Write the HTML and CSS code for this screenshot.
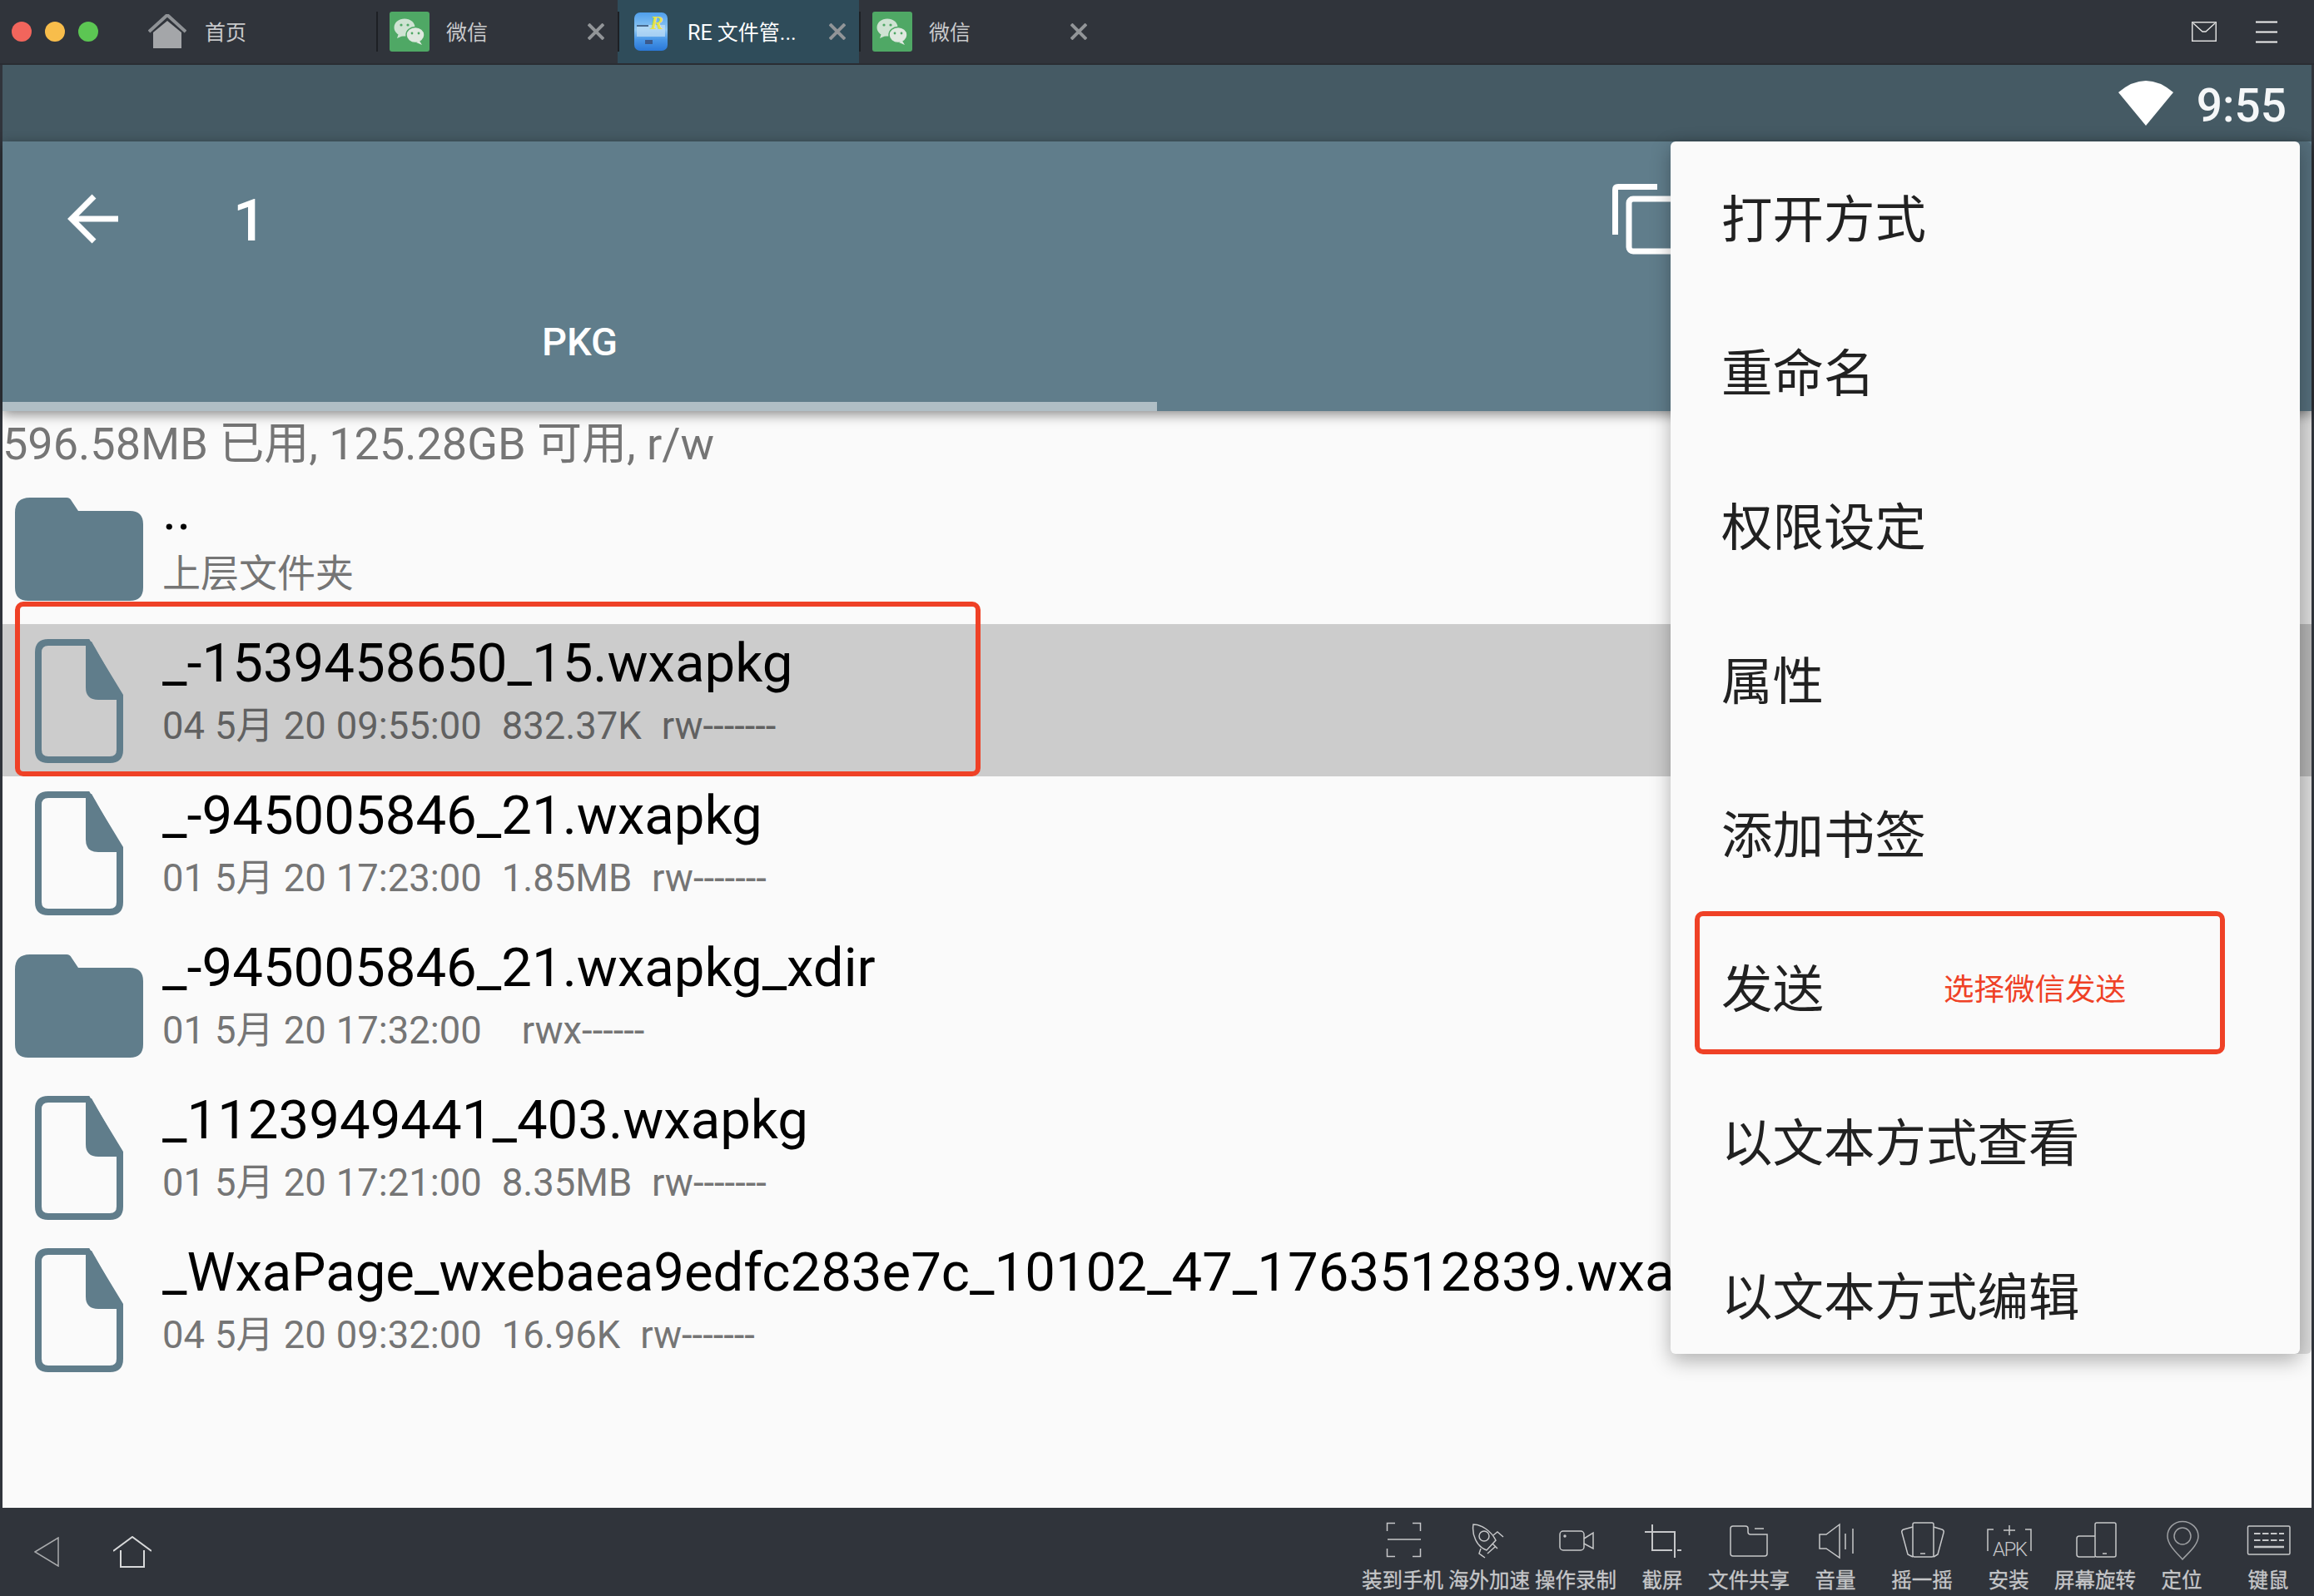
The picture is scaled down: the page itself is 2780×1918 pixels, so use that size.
FILE: index.html
```html
<!DOCTYPE html>
<html lang="zh-CN">
<head>
<meta charset="utf-8">
<title>RE 文件管理器</title>
<link rel="stylesheet" href="styles.css">
</head>
<body>
<svg class="defs" width="0" height="0" aria-hidden="true">
  <defs>
    <symbol id="wechat" viewBox="0 0 48 48">
      <rect width="48" height="48" rx="3" fill="#4fa865"/>
      <ellipse cx="18" cy="19" rx="12.5" ry="10.5" fill="#cfe3d3"/>
      <path d="M11 26l-2 6 7-3z" fill="#cfe3d3"/>
      <ellipse cx="31" cy="28" rx="11" ry="9.5" fill="#dfe9e0" stroke="#4fa865" stroke-width="1.5"/>
      <path d="M36 35l3 5-7-3z" fill="#dfe9e0"/>
      <circle cx="14" cy="16" r="1.6" fill="#4fa865"/><circle cx="22" cy="16" r="1.6" fill="#4fa865"/>
      <circle cx="27" cy="26" r="1.4" fill="#4fa865"/><circle cx="35" cy="26" r="1.4" fill="#4fa865"/>
    </symbol>
    <symbol id="file" viewBox="0 0 106 149">
      <path d="M16 4H63L102 68V133Q102 145 90 145H16Q4 145 4 133V16Q4 4 16 4Z" fill="none" stroke="#607d8b" stroke-width="8"/>
      <path d="M61 3H68L106 70V73H76Q61 73 61 58Z" fill="#607d8b"/>
    </symbol>
    <symbol id="folder" viewBox="0 0 154 124">
      <path d="M18 0H62Q66 0 68 4L76 16H138Q154 16 154 32V108Q154 124 138 124H16Q0 124 0 108V18Q0 0 18 0Z" fill="#607d8b"/>
    </symbol>
  </defs>
</svg>
<div class="screen">
  <header class="tabbar">
    <div class="tabbar-start">
      <div class="lights">
        <span class="light light-red"></span>
        <span class="light light-yellow"></span>
        <span class="light light-green"></span>
      </div>
      <div class="home-tab">
        <svg class="home-icon" width="46" height="42" viewBox="0 0 46 42">
          <path d="M1 21L23 1L45 21" fill="none" stroke="#8f9296" stroke-width="4"/>
          <path d="M6 22L23 8L40 22V41H6Z" fill="#a4a6a9"/>
        </svg>
        <span class="tab-label">首页</span>
      </div>
    </div>
    <div class="tab">
      <span class="tab-sep"></span>
      <svg class="tab-icon"><use href="#wechat"/></svg>
      <span class="tab-label">微信</span>
      <svg class="tab-close" width="20" height="20" viewBox="0 0 20 20"><path d="M1 1L19 19M19 1L1 19"/></svg>
    </div>
    <div class="tab tab-active">
      <span class="tab-sep"></span>
      <svg class="tab-icon" viewBox="0 0 48 48">
        <defs><linearGradient id="reblue" x1="0" y1="0" x2="0" y2="1"><stop offset="0" stop-color="#4f9fec"/><stop offset=".45" stop-color="#8fc8f4"/><stop offset=".7" stop-color="#4a98e8"/><stop offset="1" stop-color="#2a78d8"/></linearGradient></defs>
        <rect x="4" y="1" width="40" height="46" rx="7" fill="url(#reblue)"/>
        <path d="M7 16h34v14H7z" fill="#bcdcf6" opacity=".75"/>
        <path d="M7 17h14" stroke="#26456b" stroke-width="1.5"/>
        <rect x="17" y="34" width="9" height="5" fill="#3b5a8c"/>
        <text x="23" y="21" class="re-letter">R</text>
      </svg>
      <span class="tab-label">RE 文件管...</span>
      <svg class="tab-close" width="20" height="20" viewBox="0 0 20 20"><path d="M1 1L19 19M19 1L1 19"/></svg>
    </div>
    <div class="tab">
      <span class="tab-sep"></span>
      <svg class="tab-icon"><use href="#wechat"/></svg>
      <span class="tab-label">微信</span>
      <svg class="tab-close" width="20" height="20" viewBox="0 0 20 20"><path d="M1 1L19 19M19 1L1 19"/></svg>
    </div>
    <div class="tabbar-actions">
      <svg width="30" height="24" viewBox="0 0 30 24">
        <rect x=".75" y=".75" width="28.5" height="22.5" fill="none" stroke="#dcdcdc" stroke-width="1.5"/>
        <path d="M2 2L13 12H17L28 2" fill="none" stroke="#e8e8e8" stroke-width="1.3"/>
      </svg>
      <svg width="26" height="27" viewBox="0 0 26 27"><path d="M0 1.5H26M0 13.5H26M0 25.5H26" stroke="#eeeeee" stroke-width="2"/></svg>
    </div>
  </header>

  <main class="device">
    <div class="statusbar">
      <svg width="66" height="54" viewBox="0 0 66 54"><path d="M33 54L0 14Q33 -14 66 14Z" fill="#fff"/></svg>
      <span class="clock">9:55</span>
    </div>

    <section class="toolbar">
      <div class="toolbar-head">
        <svg class="back" width="61" height="60" viewBox="0 0 61 60"><path d="M61 30H6M32 3L5 30L32 57" fill="none" stroke="#fff" stroke-width="7"/></svg>
        <span class="title">1</span>
        <svg class="copy" width="80" height="85" viewBox="0 0 80 85" fill="none" stroke="#fff" stroke-width="7">
          <path d="M3.5 61V7Q3.5 3.5 7 3.5H54"/>
          <rect x="20" y="18" width="72" height="63" rx="5"/>
        </svg>
      </div>
      <div class="toolbar-tab">PKG</div>
    </section>

    <section class="files">
      <div class="storage">596.58MB 已用, 125.28GB 可用, r/w</div>
      <div class="row">
        <div class="row-icon"><svg class="ico-folder"><use href="#folder"/></svg></div>
        <div class="row-text"><div class="name">..</div><div class="meta meta-parent">上层文件夹</div></div>
      </div>
      <div class="row row-selected">
        <div class="row-icon"><svg class="ico-file"><use href="#file"/></svg></div>
        <div class="row-text"><div class="name">_-1539458650_15.wxapkg</div><div class="meta">04 5月 20 09:55:00  832.37K  rw-------</div></div>
      </div>
      <div class="row">
        <div class="row-icon"><svg class="ico-file"><use href="#file"/></svg></div>
        <div class="row-text"><div class="name">_-945005846_21.wxapkg</div><div class="meta">01 5月 20 17:23:00  1.85MB  rw-------</div></div>
      </div>
      <div class="row">
        <div class="row-icon"><svg class="ico-folder"><use href="#folder"/></svg></div>
        <div class="row-text"><div class="name">_-945005846_21.wxapkg_xdir</div><div class="meta">01 5月 20 17:32:00    rwx------</div></div>
      </div>
      <div class="row">
        <div class="row-icon"><svg class="ico-file"><use href="#file"/></svg></div>
        <div class="row-text"><div class="name">_1123949441_403.wxapkg</div><div class="meta">01 5月 20 17:21:00  8.35MB  rw-------</div></div>
      </div>
      <div class="row">
        <div class="row-icon"><svg class="ico-file"><use href="#file"/></svg></div>
        <div class="row-text"><div class="name">_WxaPage_wxebaea9edfc283e7c_10102_47_1763512839.wxapkg</div><div class="meta">04 5月 20 09:32:00  16.96K  rw-------</div></div>
      </div>
    </section>
  </main>

  <footer class="dock">
    <div class="nav">
      <svg width="30" height="36" viewBox="0 0 30 36"><path d="M1 18L29 1V35Z" fill="none" stroke="#a9abad" stroke-width="1.5"/></svg>
      <svg width="46" height="38" viewBox="0 0 46 38" fill="none" stroke="#d8d9da" stroke-width="2"><path d="M0 18L23 1L46 18"/><path d="M9 17V37H37V17"/></svg>
    </div>
    <div class="tools">
      <div class="tool">
        <svg class="tool-icon" viewBox="0 0 60 44"><path d="M21 1.5H11.5V11M42 1.5H51.5V11M11.5 32V41.5H21M51.5 32V41.5H42M12 21H52"/></svg>
        <span>装到手机</span>
      </div>
      <div class="tool">
        <svg class="tool-icon" viewBox="0 0 60 44"><path d="M11 3C20 3 32 10 38 22L27 34C15 30 9 15 11 3Z"/><circle cx="24" cy="17" r="6"/><path d="M35 16L40 12L47 18M20 32L18 38L25 43M37 30L28 38M34 26L40 32"/></svg>
        <span>海外加速</span>
      </div>
      <div class="tool">
        <svg class="tool-icon" viewBox="0 0 60 44"><rect x="11" y="11" width="29" height="23" rx="4"/><path d="M40 20L51 13V32L40 26"/><circle cx="17" cy="17" r="1" class="dot"/></svg>
        <span>操作录制</span>
      </div>
      <div class="tool">
        <svg class="tool-icon icon-bold" viewBox="0 0 60 44"><path d="M9 12H45V43M18 3V34H42M48 34H53"/></svg>
        <span>截屏</span>
      </div>
      <div class="tool">
        <svg class="tool-icon" viewBox="0 0 60 44"><path d="M8 8Q8 5 11 5H26Q29 5 29 8V12Q29 15 32 15H52V38Q52 41 49 41H11Q8 41 8 38ZM37 8H48"/></svg>
        <span>文件共享</span>
      </div>
      <div class="tool">
        <svg class="tool-icon" viewBox="0 0 60 44"><path d="M35 3L19 15H11V32H19L35 43ZM42 14V33M51 8V38"/></svg>
        <span>音量</span>
      </div>
      <div class="tool">
        <svg class="tool-icon" viewBox="0 0 60 44"><rect x="19" y="1" width="25" height="41" rx="2"/><path d="M19 6L8 9Q5 10 6 13L13 39L19 42M44 6L54 9Q57 10 56 13L49 39L44 42M28 38H34"/></svg>
        <span>摇一摇</span>
      </div>
      <div class="tool">
        <svg class="tool-icon" viewBox="0 0 60 44"><path d="M12 9H5V35M50 9H57V35M24 10H38M31 4V16"/><text x="11" y="41" class="apk-text" textLength="42">APK</text></svg>
        <span>安装</span>
      </div>
      <div class="tool">
        <svg class="tool-icon" viewBox="0 0 60 44"><rect x="30" y="1" width="25" height="41" rx="2"/><path d="M30 17H11Q8 17 8 20V39Q8 42 11 42H30M39 38H44"/></svg>
        <span>屏幕旋转</span>
      </div>
      <div class="tool">
        <svg class="tool-icon icon-pin" viewBox="0 0 60 44"><path d="M31 -0.5C20 -0.5 13 8 13 17C13 28 25 38 31 45C37 38 50 28 50 17C50 8 42 -0.5 31 -0.5Z"/><circle cx="31" cy="17" r="10"/></svg>
        <span>定位</span>
      </div>
      <div class="tool">
        <svg class="tool-icon" viewBox="0 0 60 44"><rect x="5.5" y="5" width="50.5" height="34" rx="1.5"/><path class="keys" d="M13 14H49M13 22H49"/><path class="space" d="M13 30H49"/></svg>
        <span>键鼠</span>
      </div>
    </div>
  </footer>

  <aside class="popup">
    <div class="popup-item">打开方式</div>
    <div class="popup-item">重命名</div>
    <div class="popup-item">权限设定</div>
    <div class="popup-item">属性</div>
    <div class="popup-item">添加书签</div>
    <div class="popup-item">发送</div>
    <div class="popup-item">以文本方式查看</div>
    <div class="popup-item">以文本方式编辑</div>
  </aside>

  <div class="mark mark-file"></div>
  <div class="mark mark-send"><span class="mark-note">选择微信发送</span></div>
</div>
</body>
</html>
```

FILE: styles.css
```css
* { box-sizing: border-box; }

html, body {
  margin: 0;
  padding: 0;
  background: #30343b;
}

.defs { position: absolute; }

.screen {
  position: relative;
  width: 2780px;
  height: 1918px;
  overflow: hidden;
  display: flex;
  flex-direction: column;
  font-family: Roboto, "Noto Sans CJK SC", sans-serif;
}

/* Mac window tab bar */
.tabbar {
  height: 78px;
  flex: none;
  display: flex;
  align-items: stretch;
  background: #30343b;
  border-bottom: 2px solid #2a2d33;
}
.tabbar-start {
  width: 452px;
  display: flex;
  align-items: center;
}
.lights {
  display: flex;
  gap: 16px;
  padding-left: 14px;
}
.light {
  width: 24px;
  height: 24px;
  border-radius: 50%;
}
.light-red { background: #f2655c; }
.light-yellow { background: #f8bd4b; }
.light-green { background: #5cc653; }
.home-tab {
  display: flex;
  align-items: center;
  gap: 22px;
  margin-left: 60px;
}
.home-icon { margin-top: -1px; }
.tab-label {
  font-size: 25px;
  line-height: 30px;
  padding-top: 3px;
  color: #c8c9cb;
  white-space: nowrap;
}
.tab {
  width: 290px;
  display: flex;
  align-items: center;
}
.tab-active { background: #2f4c5a; }
.tab-active .tab-label { color: #ffffff; }
.tab-sep {
  width: 2px;
  height: 48px;
  background: #1d2024;
}
.tab-icon {
  width: 48px;
  height: 48px;
  margin: 0 20px 0 14px;
  overflow: visible;
}
.tab-close {
  margin-left: auto;
  margin-right: 16px;
}
.tab-close path {
  fill: none;
  stroke: #929598;
  stroke-width: 4;
}
.re-letter {
  font-family: "Liberation Serif", serif;
  font-style: italic;
  font-weight: 700;
  font-size: 24px;
  fill: #e6e24a;
}
.tabbar-actions {
  margin-left: auto;
  display: flex;
  align-items: center;
  gap: 47px;
  padding-right: 44px;
}

/* Android screen */
.device {
  flex: 1;
  min-height: 0;
  margin: 0 3px;
  display: flex;
  flex-direction: column;
  background: #fafafa;
}
.statusbar {
  height: 92px;
  flex: none;
  display: flex;
  align-items: center;
  justify-content: flex-end;
  gap: 28px;
  padding-right: 30px;
  background: #455a64;
}
.clock {
  padding-top: 5px;
  font-size: 55px;
  font-weight: 500;
  line-height: 64px;
  color: #f5f7f8;
}
.toolbar {
  position: relative;
  z-index: 1;
  height: 324px;
  flex: none;
  background: #607d8b;
  box-shadow: 0 4px 14px rgba(0, 0, 0, 0.45);
}
.toolbar-head {
  height: 186px;
  display: flex;
  align-items: center;
  padding-left: 78px;
}
.title {
  margin-left: 138px;
  padding-top: 4px;
  font-size: 70px;
  font-weight: 500;
  color: #ffffff;
}
.copy {
  margin-left: auto;
  margin-right: 760px;
}
.toolbar-tab {
  width: 1387px;
  height: 138px;
  display: flex;
  align-items: center;
  justify-content: center;
  padding-bottom: 19px;
  border-bottom: 11px solid #b0bec5;
  font-size: 47px;
  font-weight: 500;
  color: #ffffff;
}

/* File list */
.files {
  flex: 1;
  min-height: 0;
  overflow: hidden;
}
.storage {
  height: 73px;
  line-height: 73px;
  padding: 3px 0 0 0;
  font-size: 54px;
  color: #757575;
  white-space: nowrap;
}
.row {
  height: 183px;
  display: flex;
}
.row-selected { background: #cccccc; }
.row-icon {
  width: 193px;
  flex: none;
  display: flex;
  align-items: center;
  justify-content: center;
  padding: 2px 9px 0 0;
}
.ico-file { width: 106px; height: 149px; }
.ico-folder { width: 154px; height: 124px; }
.row-text {
  padding-top: 9px;
  min-width: 0;
  white-space: pre;
}
.name {
  font-size: 65.3px;
  line-height: 76px;
  margin-left: -1px;
  color: #000000;
}
.meta {
  font-size: 45.4px;
  line-height: 75px;
  margin-left: -1px;
  word-spacing: 0.7px;
  color: #757575;
}
.meta-parent { font-size: 46px; }
.row-selected .meta { color: #616161; }

/* Bottom dock */
.dock {
  height: 106px;
  flex: none;
  display: flex;
  justify-content: space-between;
  background: #30343b;
  padding-right: 3px;
}
.nav {
  display: flex;
  align-items: center;
  gap: 65px;
  padding: 0 0 0 41px;
  height: 106px;
}
.tools { display: flex; }
.tool {
  width: 104px;
  display: flex;
  flex-direction: column;
  align-items: center;
  padding-top: 17px;
  font-size: 24.5px;
  line-height: 28px;
  color: #c6c7c9;
  white-space: nowrap;
  -webkit-text-stroke: 0.3px #c6c7c9;
}
.tool span { margin-top: 13px; }
.tool-icon {
  width: 60px;
  height: 44px;
  flex: none;
  overflow: visible;
  fill: none;
  stroke: #c6c7c9;
  stroke-width: 1.5;
  -webkit-text-stroke: 0;
}
.icon-bold { stroke-width: 2; }
.icon-pin { stroke: #9ea0a3; }
.dot { fill: #c6c7c9; }
.keys { stroke-dasharray: 7.5 2.5; stroke-width: 2; }
.space { stroke-width: 2.5; }
.apk-text {
  font-family: Roboto, sans-serif;
  font-weight: 300;
  font-size: 24px;
  fill: #c6c7c9;
  stroke: none;
}

/* Overflow menu */
.popup {
  position: absolute;
  left: 2007px;
  top: 170px;
  z-index: 2;
  width: 756px;
  height: 1457px;
  overflow: hidden;
  background: #fafafa;
  border-radius: 6px;
  box-shadow: 0 8px 24px rgba(0, 0, 0, 0.3), 14px 0 0 rgba(0, 0, 0, 0.12);
}
.popup-item {
  height: 185px;
  display: flex;
  align-items: center;
  padding: 0 0 6px 61px;
  font-size: 61.5px;
  color: #212121;
}

/* Red annotations drawn on the screenshot */
.mark {
  position: absolute;
  z-index: 3;
  border: 6px solid #ef4126;
  border-radius: 10px;
}
.mark-file {
  left: 18px;
  top: 723px;
  width: 1160px;
  height: 210px;
}
.mark-send {
  left: 2036px;
  top: 1095px;
  width: 637px;
  height: 172px;
  display: flex;
  align-items: center;
  padding: 18px 0 0 293px;
}
.mark-note {
  font-size: 36.5px;
  line-height: 44px;
  color: #ef4126;
}
```
